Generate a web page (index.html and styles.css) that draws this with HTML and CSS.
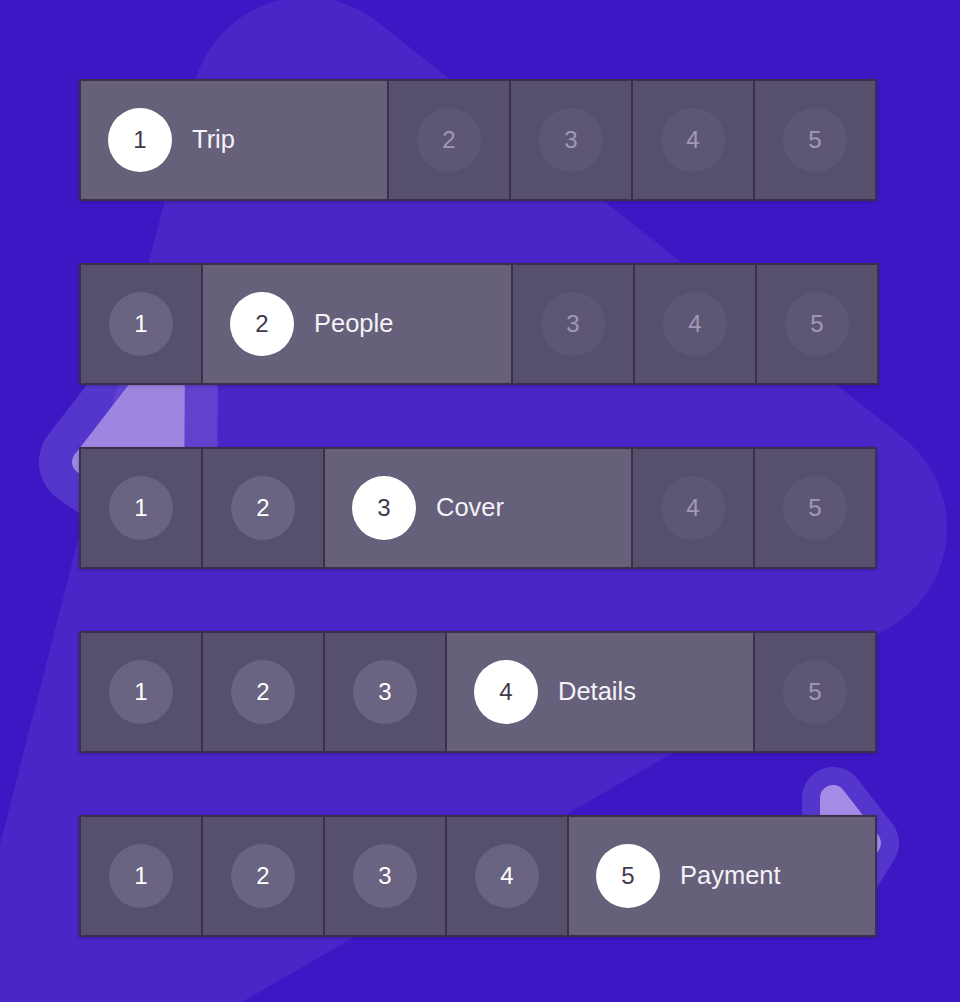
FILE: index.html
```html
<!DOCTYPE html>
<html lang="en">
<head>
<meta charset="utf-8">
<title>Steps</title>
<link rel="stylesheet" href="styles.css">
</head>
<body>
<div class="bg" aria-hidden="true">
  <svg class="bg-art" width="960" height="1002" viewBox="0 0 960 1002">
    <polygon points="306,112 832,528 90,957" fill="#4826c8" stroke="#4826c8" stroke-width="230" stroke-linejoin="round"/>
    <g opacity="0.13">
      <polygon points="173,347 84,462 172,522" fill="#fff" stroke="#fff" stroke-width="90" stroke-linejoin="round"/>
    </g>
    <polygon points="173,347 84,462 172,522" fill="#9c86e0" stroke="#9c86e0" stroke-width="24" stroke-linejoin="round"/>
    <g opacity="0.13">
      <polygon points="833,798 868,843 833,900" fill="#fff" stroke="#fff" stroke-width="62" stroke-linejoin="round"/>
    </g>
    <polygon points="833,798 868,843 833,900" fill="#a38ce6" stroke="#a38ce6" stroke-width="26" stroke-linejoin="round"/>
  </svg>
</div>

<main class="stack">
  <div class="bar">
    <div class="step active"><span class="dot">1</span><span class="label">Trip</span></div>
    <div class="step future"><span class="dot">2</span></div>
    <div class="step future"><span class="dot">3</span></div>
    <div class="step future"><span class="dot">4</span></div>
    <div class="step future"><span class="dot">5</span></div>
  </div>

  <div class="bar wide">
    <div class="step done"><span class="dot">1</span></div>
    <div class="step active"><span class="dot">2</span><span class="label">People</span></div>
    <div class="step future"><span class="dot">3</span></div>
    <div class="step future"><span class="dot">4</span></div>
    <div class="step future"><span class="dot">5</span></div>
  </div>

  <div class="bar">
    <div class="step done"><span class="dot">1</span></div>
    <div class="step done"><span class="dot">2</span></div>
    <div class="step active"><span class="dot">3</span><span class="label">Cover</span></div>
    <div class="step future"><span class="dot">4</span></div>
    <div class="step future"><span class="dot">5</span></div>
  </div>

  <div class="bar">
    <div class="step done"><span class="dot">1</span></div>
    <div class="step done"><span class="dot">2</span></div>
    <div class="step done"><span class="dot">3</span></div>
    <div class="step active"><span class="dot">4</span><span class="label">Details</span></div>
    <div class="step future"><span class="dot">5</span></div>
  </div>

  <div class="bar">
    <div class="step done"><span class="dot">1</span></div>
    <div class="step done"><span class="dot">2</span></div>
    <div class="step done"><span class="dot">3</span></div>
    <div class="step done"><span class="dot">4</span></div>
    <div class="step active"><span class="dot">5</span><span class="label">Payment</span></div>
  </div>
</main>
</body>
</html>
```

FILE: styles.css
```css
html, body {
  margin: 0;
  padding: 0;
}

body {
  background: #3c18c5;
  font-family: "Liberation Sans", Arial, Helvetica, sans-serif;
  height: 1002px;
  overflow: hidden;
  position: relative;
}

.bg {
  position: absolute;
  inset: 0;
  z-index: 0;
}

.bg-art {
  display: block;
}

.stack {
  position: relative;
  z-index: 1;
  display: flex;
  flex-direction: column;
  align-items: flex-start;
  gap: 62px;
  padding: 79px 0 0 79px;
}

.bar {
  display: flex;
  gap: 2px;
  padding: 2px;
  background: #383149;
  box-shadow: 0 1px 3px rgba(20, 0, 60, 0.25);
}

.step {
  box-sizing: border-box;
  width: 120px;
  height: 118px;
  display: flex;
  align-items: center;
  justify-content: center;
  background: #57506c;
}

.step.active {
  width: 306px;
  justify-content: flex-start;
  padding-left: 27px;
  gap: 20px;
  background: #67607a;
}

.bar.wide .step.active {
  width: 308px;
}

.dot {
  width: 64px;
  height: 64px;
  border-radius: 50%;
  display: flex;
  align-items: center;
  justify-content: center;
  font-size: 24px;
  line-height: 1;
  flex: none;
}

.future .dot {
  background: #5e5774;
  color: #a098b9;
}

.done .dot {
  background: #6a6381;
  color: #ffffff;
}

.active .dot {
  background: #ffffff;
  color: #3f3a4c;
}

.label {
  color: #f4f2f8;
  font-size: 25.5px;
  line-height: 1;
}
```
